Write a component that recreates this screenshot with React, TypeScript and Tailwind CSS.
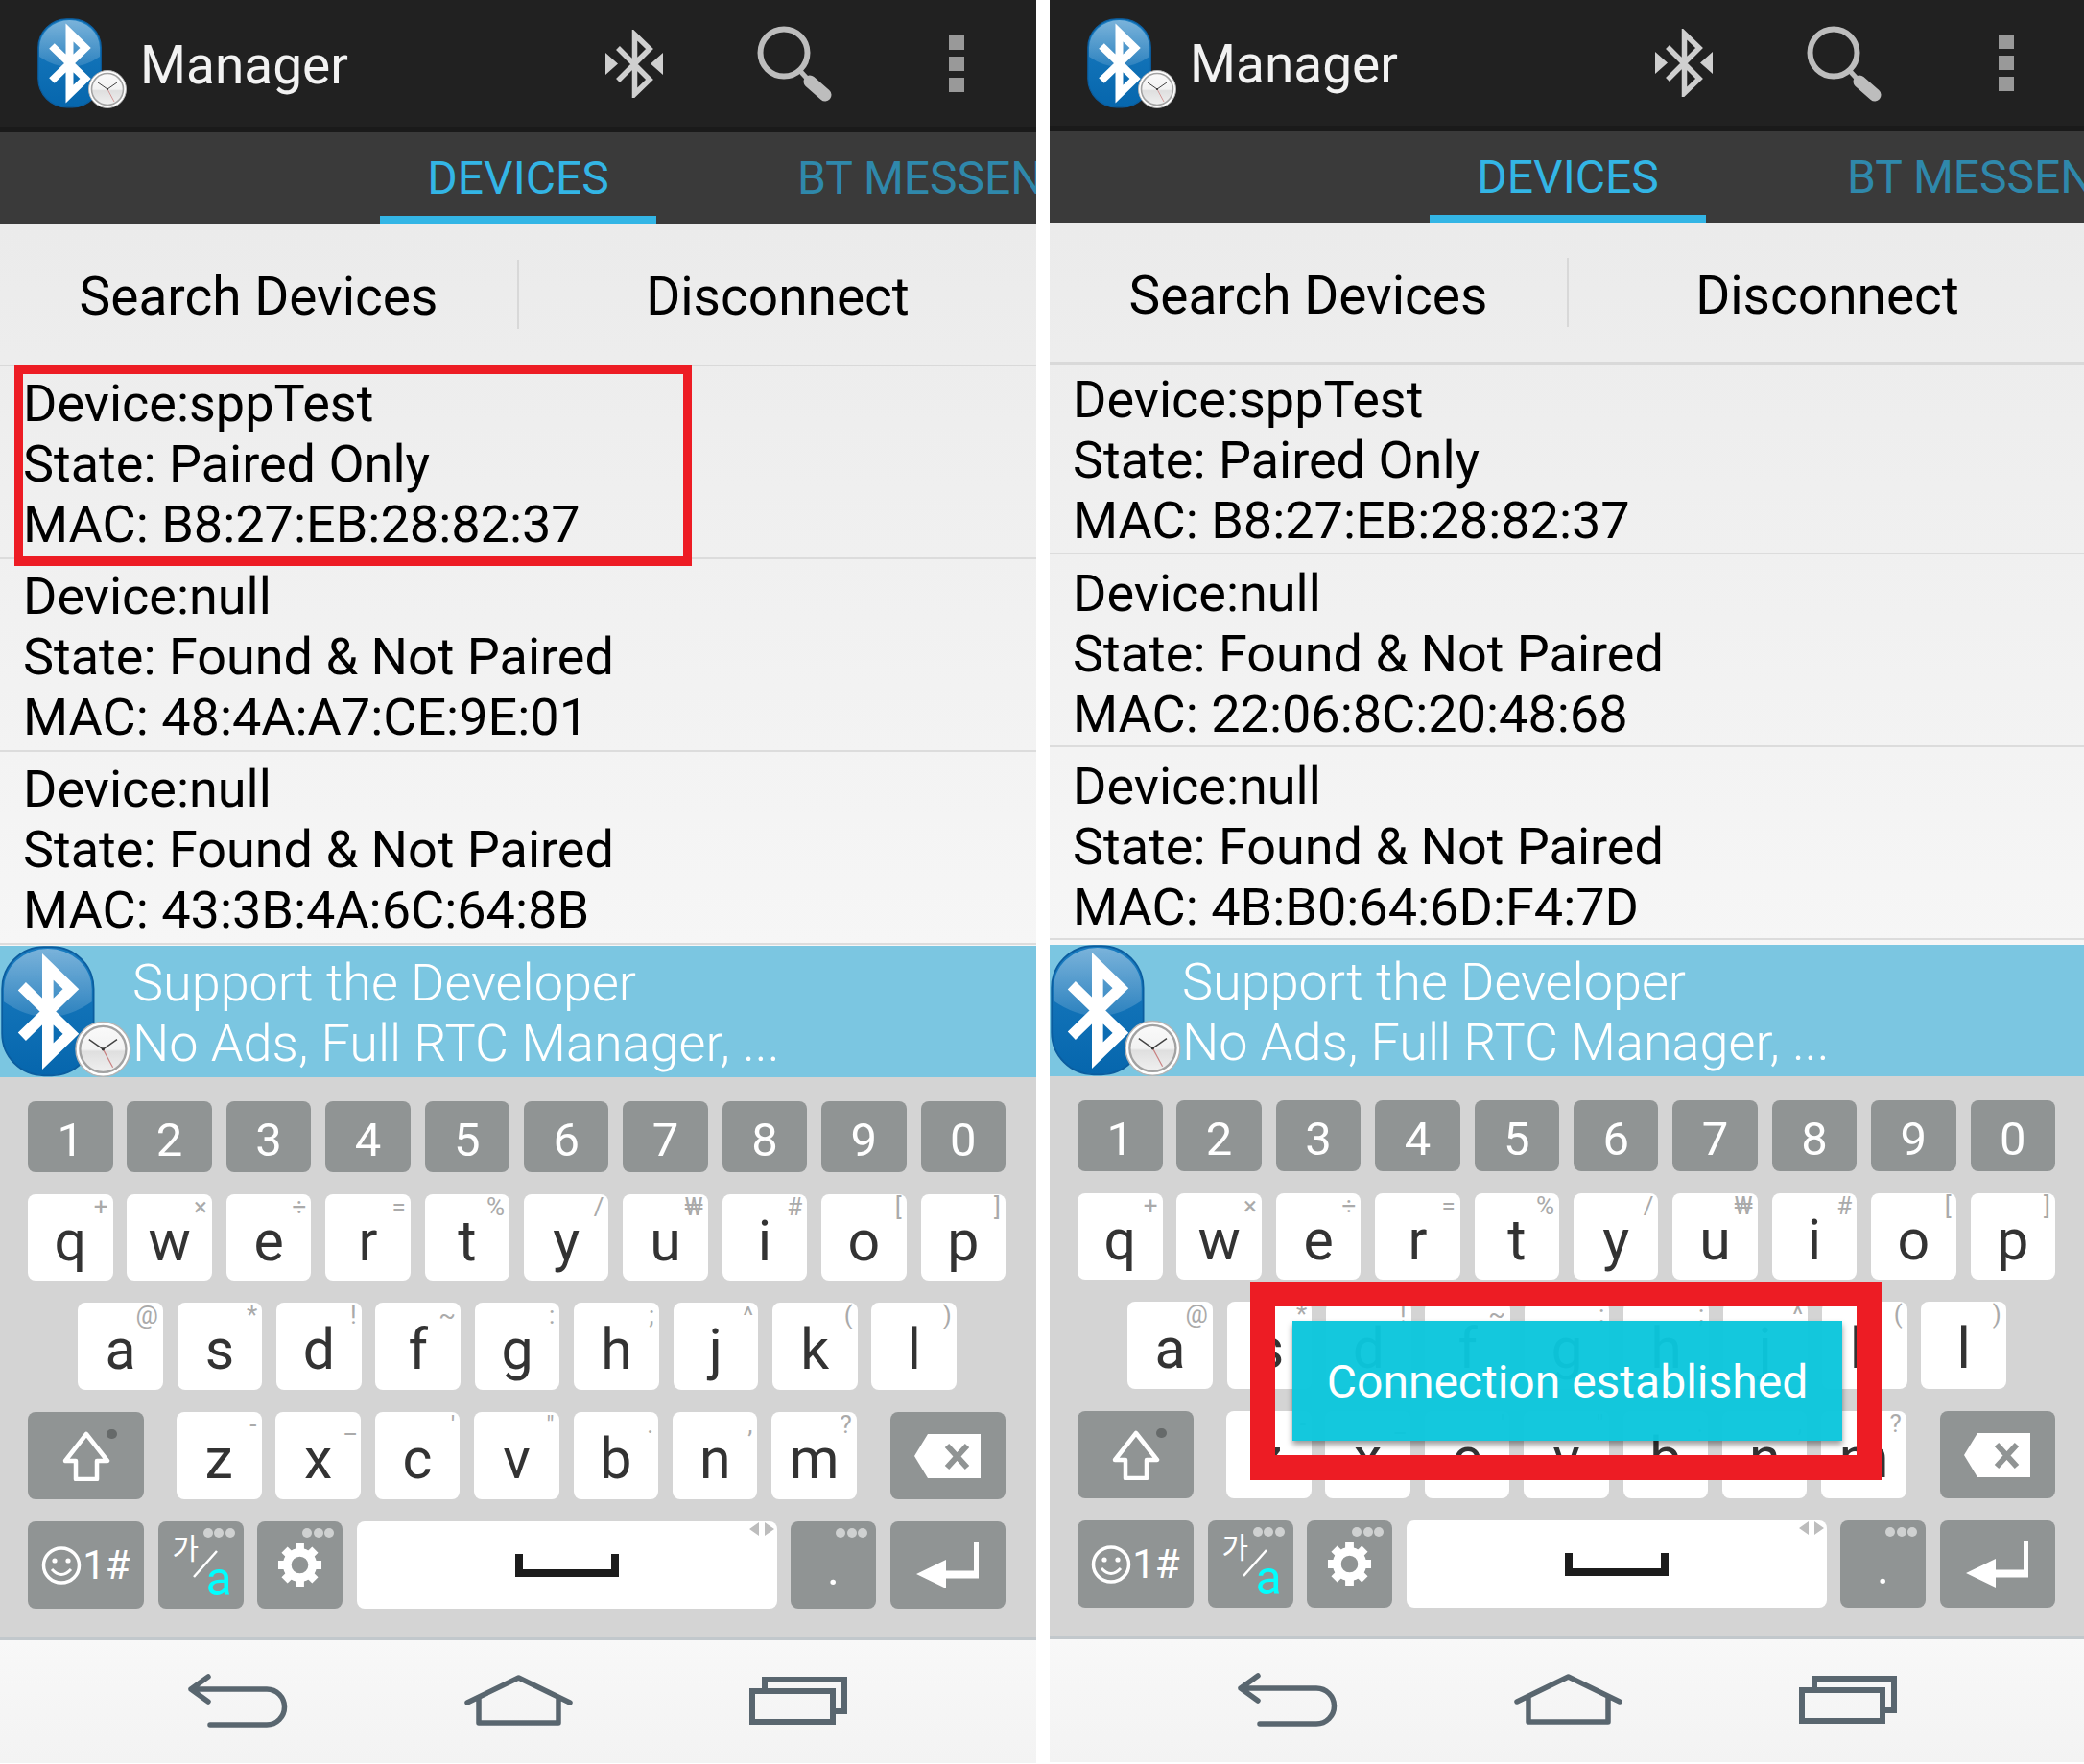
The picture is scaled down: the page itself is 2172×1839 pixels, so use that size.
import type { ReactNode } from 'react'

const numberKeys = ['1', '2', '3', '4', '5', '6', '7', '8', '9', '0']
const topKeys = [['q', '+'], ['w', '×'], ['e', '÷'], ['r', '='], ['t', '%'], ['y', '/'], ['u', '₩'], ['i', '#'], ['o', '['], ['p', ']']]
const homeKeys = [['a', '@'], ['s', '*'], ['d', '!'], ['f', '~'], ['g', ':'], ['h', ';'], ['j', '^'], ['k', '('], ['l', ')']]
const bottomKeys = [['z', '-'], ['x', '_'], ['c', "'"], ['v', '"'], ['b', '.'], ['n', ','], ['m', '?']]

const leftDevices = [
  { name: 'sppTest', state: 'Paired Only', mac: 'B8:27:EB:28:82:37' },
  { name: 'null', state: 'Found & Not Paired', mac: '48:4A:A7:CE:9E:01' },
  { name: 'null', state: 'Found & Not Paired', mac: '43:3B:4A:6C:64:8B' },
]
const rightDevices = [
  { name: 'sppTest', state: 'Paired Only', mac: 'B8:27:EB:28:82:37' },
  { name: 'null', state: 'Found & Not Paired', mac: '22:06:8C:20:48:68' },
  { name: 'null', state: 'Found & Not Paired', mac: '4B:B0:64:6D:F4:7D' },
]

function AppLogo({ className }: { className: string }) {
  return (
    <svg viewBox="0 0 94 94" className={className}>
      <defs>
        <linearGradient id="logoBody" x1="0" y1="0" x2="0" y2="1">
          <stop offset="0" stopColor="#1a7cc0" />
          <stop offset="1" stopColor="#0666ad" />
        </linearGradient>
        <linearGradient id="logoGloss" x1="0" y1="0" x2="0" y2="1">
          <stop offset="0" stopColor="#ffffff" stopOpacity="0.42" />
          <stop offset="1" stopColor="#ffffff" stopOpacity="0.12" />
        </linearGradient>
        <linearGradient id="clockFace" x1="0" y1="0" x2="0" y2="1">
          <stop offset="0" stopColor="#fafafa" />
          <stop offset="0.5" stopColor="#f2f2f2" />
          <stop offset="0.55" stopColor="#dfdfdf" />
          <stop offset="1" stopColor="#f0f0f0" />
        </linearGradient>
      </defs>
      <rect x="0.8" y="0.8" width="65.5" height="92" rx="30" fill="url(#logoBody)" stroke="#0b5d9f" strokeWidth="1.2" />
      <path d="M2 40 Q33.5 62 65 40 V31 A31.5 29 0 0 0 2 31 Z" fill="url(#logoGloss)" />
      <path
        d="M15 29 L50 63 L33.5 79 V15 L50 31 L15 65"
        fill="none"
        stroke="#ffffff"
        strokeWidth="8"
        strokeLinecap="butt"
        strokeMiterlimit="6"
      />
      <circle cx="73" cy="74" r="19.5" fill="#ffffff" stroke="#b4b4b4" strokeWidth="1" />
      <circle cx="73" cy="74" r="16.5" fill="url(#clockFace)" stroke="#a2a2a2" strokeWidth="1.6" />
      <path d="M73 74 L63 67 M73 74 L83 67" stroke="#444444" strokeWidth="1" fill="none" />
      <path d="M73 74 L80 87" stroke="#c98080" strokeWidth="0.8" fill="none" />
      <circle cx="73" cy="74" r="1.1" fill="#333333" />
    </svg>
  )
}

function BluetoothSearchIcon() {
  return (
    <svg viewBox="0 0 60 71" className="h-[71px] w-[60px]">
      <path d="M13 19 L46 52 L30.5 67 V5 L46 20 L13 53" fill="none" stroke="#cfcfcf" strokeWidth="5.5" />
      <path d="M0 24 L13 35.5 L0 47 Z M60 24 L47 35.5 L60 47 Z" fill="#cfcfcf" />
    </svg>
  )
}

function MagnifierIcon() {
  return (
    <svg viewBox="0 0 78 80" className="h-[80px] w-[78px]">
      <circle cx="28" cy="29" r="24.5" fill="none" stroke="#bdbdbd" strokeWidth="6" />
      <path d="M45 48 L56 60" stroke="#bdbdbd" strokeWidth="5" fill="none" />
      <path d="M55 59 L71 73" stroke="#bdbdbd" strokeWidth="13" strokeLinecap="round" fill="none" />
    </svg>
  )
}

function Dots() {
  return (
    <div className="absolute top-[7px] right-[9px] flex gap-[1.5px]">
      <div className="h-[10px] w-[10px] rounded-full bg-[#cfd1d1]" />
      <div className="h-[10px] w-[10px] rounded-full bg-[#cfd1d1]" />
      <div className="h-[10px] w-[10px] rounded-full bg-[#cfd1d1]" />
    </div>
  )
}

function DarkKey({ className, children }: { className: string; children: ReactNode }) {
  return (
    <div className={`relative flex h-full items-center justify-center rounded-[8px] bg-[#909494] ${className}`}>
      {children}
    </div>
  )
}

function LetterKey({ letter, hint }: { letter: string; hint: string }) {
  return (
    <div className="relative flex h-full w-[88.5px] items-center justify-center rounded-[8px] bg-white pt-1.5 text-[59px] leading-none text-[#333333]">
      {letter}
      <span className="absolute top-[-1px] right-[5px] text-[26px] leading-7 text-[#aaaaaa]">{hint}</span>
    </div>
  )
}

function Keyboard() {
  return (
    <div className="flex flex-col gap-[23px] bg-[#d4d4d4] pt-[25px] pb-[30px]">
      <div className="flex h-[74px] gap-[14.9px] pl-[29px]">
        {numberKeys.map((key) => (
          <DarkKey key={key} className="w-[88.5px] pt-1.5 text-[49px] leading-none text-white">
            {key}
          </DarkKey>
        ))}
      </div>

      <div className="flex h-[90px] gap-[14.9px] pl-[29px]">
        {topKeys.map(([letter, hint]) => (
          <LetterKey key={letter} letter={letter} hint={hint} />
        ))}
      </div>

      <div className="flex h-[91px] gap-[14.9px] pl-[81.3px]">
        {homeKeys.map(([letter, hint]) => (
          <LetterKey key={letter} letter={letter} hint={hint} />
        ))}
      </div>

      <div className="flex h-[91px] pl-[29px]">
        <DarkKey className="w-[121px]">
          <svg viewBox="0 0 50 52" className="h-[52px] w-[50px]">
            <path d="M25 3 L47 31 H36 V50 H14 V31 H3 Z" fill="none" stroke="#ffffff" strokeWidth="4.5" strokeLinejoin="round" />
          </svg>
          <div className="absolute top-[18px] left-[82px] h-[10px] w-[11px] rounded-full bg-[#666a6a]" />
        </DarkKey>
        <div className="ml-[34px] flex h-full gap-[14.9px]">
          {bottomKeys.map(([letter, hint]) => (
            <LetterKey key={letter} letter={letter} hint={hint} />
          ))}
        </div>
        <DarkKey className="ml-[35px] w-[120px]">
          <svg viewBox="0 0 69 46" className="h-[46px] w-[69px]">
            <path d="M14 0 H69 V46 H14 L0 23 Z" fill="#ffffff" />
            <path d="M34 12 L55 35 M55 12 L34 35" stroke="#909494" strokeWidth="6" fill="none" />
          </svg>
        </DarkKey>
      </div>

      <div className="flex h-[91px] gap-[14.5px] pl-[29px]">
        <DarkKey className="w-[121px] gap-[1px] text-[42px] leading-none text-white">
          <svg viewBox="0 0 42 40" className="h-[40px] w-[42px]">
            <ellipse cx="21" cy="20" rx="18.5" ry="18" fill="none" stroke="#ffffff" strokeWidth="3.5" />
            <circle cx="14" cy="15" r="2.6" fill="#ffffff" />
            <circle cx="28" cy="15" r="2.6" fill="#ffffff" />
            <path d="M11 24 Q21 35 31 24" fill="none" stroke="#ffffff" strokeWidth="3" />
          </svg>
          <span>1#</span>
        </DarkKey>

        <DarkKey className="w-[89px]">
          <span className="absolute top-[11px] left-[15px] font-['Noto_Sans_CJK_KR',sans-serif] text-[30px] leading-none text-white">
            가
          </span>
          <svg viewBox="0 0 30 30" className="absolute top-[30px] left-[34px] h-[30px] w-[30px]">
            <path d="M27 1 L3 28" stroke="#ffffff" strokeWidth="2.5" fill="none" />
          </svg>
          <span className="absolute top-[35px] left-[50px] text-[50px] leading-none text-[#00ffff]">a</span>
          <Dots />
        </DarkKey>

        <DarkKey className="w-[89px]">
          <svg viewBox="0 0 48 48" className="h-[47px] w-[47px]">
            <circle cx="24" cy="24" r="13.5" fill="none" stroke="#ffffff" strokeWidth="9" />
            <path d="M19.5 1 H28.5 V9 H19.5 Z M19.5 39 H28.5 V47 H19.5 Z" fill="#ffffff" />
            <path d="M19.5 1 H28.5 V9 H19.5 Z M19.5 39 H28.5 V47 H19.5 Z" fill="#ffffff" transform="rotate(45 24 24)" />
            <path d="M19.5 1 H28.5 V9 H19.5 Z M19.5 39 H28.5 V47 H19.5 Z" fill="#ffffff" transform="rotate(90 24 24)" />
            <path d="M19.5 1 H28.5 V9 H19.5 Z M19.5 39 H28.5 V47 H19.5 Z" fill="#ffffff" transform="rotate(135 24 24)" />
          </svg>
          <Dots />
        </DarkKey>

        <div className="relative flex h-full w-[438px] items-center justify-center rounded-[8px] bg-white">
          <svg viewBox="0 0 108 24" className="h-[24px] w-[108px]">
            <path d="M4 0 V20 H104 V0" fill="none" stroke="#1c1c1c" strokeWidth="8" />
          </svg>
          <svg viewBox="0 0 30 14" className="absolute top-[1px] right-[1px] h-[14px] w-[30px]">
            <path d="M12 0 V14 L2 7 Z M18 0 V14 L28 7 Z" fill="#bdbdbd" />
          </svg>
        </div>

        <DarkKey className="w-[89px] pt-2 text-[49px] leading-none text-white">
          .
          <Dots />
        </DarkKey>

        <DarkKey className="w-[120px]">
          <svg viewBox="0 0 65 48" className="h-[48px] w-[65px]">
            <path d="M0 33 L31 18 V29.5 H60 V0 H65 V37.5 H31 V48 Z" fill="#ffffff" />
          </svg>
        </DarkKey>
      </div>
    </div>
  )
}

function NavBar() {
  return (
    <div className="border-t-[3px] border-[#c2c8cc]">
      <div className="flex h-[128px] items-center justify-center bg-linear-to-b from-[#f8f8f8] to-[#f3f3f3] pb-[3px]">
        <div className="flex w-[292px] justify-center">
          <svg viewBox="0 0 104 56" className="h-[56px] w-[104px]">
            <path
              d="M21 3 L3 16 L21 29 M3 16 H82 A18.5 18.5 0 0 1 82 53 H23"
              fill="none"
              stroke="#59666f"
              strokeWidth="5.5"
              strokeLinecap="round"
              strokeLinejoin="round"
            />
          </svg>
        </div>
        <div className="flex w-[292px] justify-center">
          <svg viewBox="0 0 113 54" className="h-[54px] w-[113px]">
            <path
              d="M3 29 L56.5 3 L110 29 M15 24 V50 H98 V24"
              fill="none"
              stroke="#59666f"
              strokeWidth="5.5"
              strokeLinecap="round"
              strokeLinejoin="round"
            />
          </svg>
        </div>
        <div className="flex w-[292px] justify-center">
          <svg viewBox="0 0 102 50" className="h-[50px] w-[102px]">
            <rect x="3" y="15" width="84" height="32" fill="none" stroke="#59666f" strokeWidth="6" />
            <path d="M16 13 V3 H99 V36 H89" fill="none" stroke="#59666f" strokeWidth="6" />
          </svg>
        </div>
      </div>
    </div>
  )
}

function Phone({ devices, second, children }: { devices: typeof leftDevices; second?: boolean; children?: ReactNode }) {
  return (
    <div className="relative w-[1080px] shrink-0">
      {/* Action bar */}
      <div className={`flex items-center bg-[#212121] pl-[39px] ${second ? 'h-[131px]' : 'h-[132px]'}`}>
        <AppLogo className="h-[94px] w-[94px]" />
        <span className="mt-1 ml-[13px] text-[55px] leading-none text-[#f2f2f2]">Manager</span>
        <div className="ml-auto flex items-center pr-[75px]">
          <BluetoothSearchIcon />
          <div className="ml-[98px]">
            <MagnifierIcon />
          </div>
          <div className="ml-[122px] flex flex-col gap-[7px]">
            <div className="h-[15px] w-4 bg-[#999999]" />
            <div className="h-[15px] w-4 bg-[#999999]" />
            <div className="h-[15px] w-4 bg-[#999999]" />
          </div>
        </div>
      </div>
      <div className="h-[6px] bg-[#1a1a1a]" />

      {/* Tabs */}
      <div className="flex h-[96px] overflow-hidden bg-[#3a3a3a] pl-[396px] text-[48px] leading-none">
        <div className="flex w-[288px] shrink-0 items-center justify-center border-b-[9px] border-[#33b5e5] pt-[9px] text-[#33b5e5]">
          DEVICES
        </div>
        <div className="ml-[147px] flex shrink-0 items-center whitespace-nowrap text-[#2f88ab]">BT MESSENGER</div>
      </div>

      <div className="bg-linear-to-b from-[#ebebeb] to-[#f6f6f6] text-black">
        {/* Buttons */}
        <div className={`flex items-center text-[55px] leading-none ${second ? 'h-[144px]' : 'h-[146px]'}`}>
          <div className={`flex-1 text-center ${second ? 'pt-[6px]' : 'pt-[4px]'}`}>Search Devices</div>
          <div className="h-[72px] w-[2px] bg-[#d8d8d8]" />
          <div className={`flex-1 text-center ${second ? 'pt-[6px]' : 'pt-[4px]'}`}>Disconnect</div>
        </div>
        <div className={`bg-[#d9d9d9] ${second ? 'h-[3px]' : 'h-[2px]'}`} />

        {/* Device rows */}
        {devices.map((device, index) => (
          <div
            key={device.mac}
            className={`border-b-2 border-[#dcdcdc] pl-[24px] text-[54px] leading-[63px] ${
              second ? (index === 0 ? 'h-[198px] pt-[5px]' : 'h-[201px] pt-[9px]') : 'h-[201px] pt-[7px]'
            }`}
          >
            <div>Device:{device.name}</div>
            <div>State: {device.state}</div>
            <div>MAC: {device.mac}</div>
          </div>
        ))}
        <div className={second ? 'h-[5px]' : 'h-px'} />
      </div>

      {/* Banner */}
      <div className="flex h-[137px] bg-[#7bc6e1] pl-px text-[54px] leading-[63px] font-light text-white">
        <AppLogo className="h-[137px] w-[137px]" />
        <div className="pt-[7px]">
          <div>Support the Developer</div>
          <div>No Ads, Full RTC Manager, ...</div>
        </div>
      </div>

      <Keyboard />
      <NavBar />
      {children}
    </div>
  )
}

export default function App() {
  return (
    <div className="flex h-[1839px] w-[2172px] gap-[14px] overflow-hidden bg-white font-['Roboto',sans-serif]">
      <Phone devices={leftDevices}>
        <div className="absolute top-[380px] left-[15px] h-[210px] w-[706px] border-x-[9px] border-y-[10px] border-[#ed1c24]" />
      </Phone>
      <Phone devices={rightDevices} second>
        <div className="absolute top-[1377px] left-[253px] flex h-[125px] w-[573px] items-center justify-center bg-[#0cc6dc]/97 pt-[3px] text-[48px] leading-none text-white shadow-[0_4px_6px_rgba(0,0,0,0.4)]">
          Connection established
        </div>
        <div className="absolute top-[1336px] left-[209px] h-[207px] w-[658px] border-[26px] border-[#ed1c24]" />
      </Phone>
    </div>
  )
}
